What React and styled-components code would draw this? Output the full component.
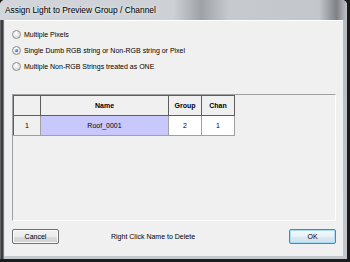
import React, { useState } from "react"
import styled, { createGlobalStyle } from "styled-components"

const GlobalStyle = createGlobalStyle`
  html, body {
    margin: 0;
    padding: 0;
    background: #1b1b1b;
  }
  body {
    width: 350px;
    height: 262px;
    overflow: hidden;
    font-family: "Liberation Sans", Arial, sans-serif;
  }
`

const Window = styled.div`
  display: flex;
  flex-direction: column;
  width: 347px;
  height: 259px;
  border-radius: 5px 5px 0 0;
  overflow: hidden;
  background: linear-gradient(to bottom, #c9ced3 0, #bfc4c9 30px, #b6babe 100%);
`

const TitleBar = styled.div`
  display: flex;
  align-items: center;
  height: 20px;
  padding-left: 5px;
  font-size: 8.4px;
  color: #000;
  text-shadow: 0 0 4px rgba(255, 255, 255, 0.9);
  background: linear-gradient(
    to right,
    #d2d6da 0,
    #cdd1d5 50%,
    #9ea2a6 58%,
    #c6cace 66%,
    #c3c7cb 92%,
    #7e8286 97%,
    #c0c4c8 100%
  );
`

const Frame = styled.div`
  flex: 1;
  display: flex;
  padding: 0 4px 3px 4px;
  background: linear-gradient(
      to right,
      #8c9094 0,
      #3a3c3e 1px,
      #3a3c3e 3px,
      #b8bcc0 4px,
      transparent 4px
    ),
    linear-gradient(to bottom, #b8bcc0, #c4c8cc);
`

const Client = styled.div`
  flex: 1;
  display: flex;
  flex-direction: column;
  background: #f0f0f0;
  border-top: 1px solid #ffffff;
  border-left: 1px solid #e6e6e6;
  font-size: 7px;
  color: #000;
`

const Options = styled.div`
  display: flex;
  flex-direction: column;
  gap: 6px;
  padding: 8px 7px 0 7px;
`

const OptionRow = styled.label`
  display: flex;
  align-items: center;
  gap: 3px;
  height: 10px;
  cursor: default;
`

const RadioCircle = styled.span`
  position: relative;
  width: 7px;
  height: 7px;
  border-radius: 50%;
  border: 1px solid #8f8f8f;
  background: radial-gradient(circle at 40% 35%, #ffffff 0, #e4e4e4 55%, #cfcfcf 100%);
  box-sizing: content-box;

  &::after {
    content: "";
    display: ${(p) => (p.checked ? "block" : "none")};
    position: absolute;
    left: 2px;
    top: 2px;
    width: 3px;
    height: 3px;
    border-radius: 50%;
    background: radial-gradient(circle at 35% 35%, #8ed0f5 0, #2a6fae 60%, #174d80 100%);
  }
`

const Panel = styled.div`
  height: 127px;
  margin: 23px 7px 0 7px;
  border-top: 1px solid #a0a0a0;
  border-left: 1px solid #a0a0a0;
  border-right: 1px solid #ffffff;
  border-bottom: 1px solid #ffffff;
  box-sizing: border-box;
  background: #f0f0f0;
`

const Grid = styled.table`
  width: 222px;
  border-collapse: collapse;
  table-layout: fixed;
  font-size: 7px;
`

const HeadCell = styled.th`
  height: 19px;
  padding: 0;
  border: 1px solid #5e5e5e;
  font-weight: bold;
  text-align: center;
  background: #f0f0f0;
`

const Cell = styled.td`
  height: 19px;
  padding: 0;
  border: 1px solid #a0a0a0;
  text-align: center;
  background: ${(p) => p.bg || "#ffffff"};
`

const RowHead = styled(Cell)`
  border-left-color: #5e5e5e;
  border-top-color: #5e5e5e;
`

const Footer = styled.div`
  display: flex;
  align-items: center;
  padding: 0 7px;
  margin-top: 8px;
`

const Button = styled.button`
  width: 47px;
  height: 15px;
  padding: 0;
  font-family: inherit;
  font-size: 7px;
  color: #000;
  border-radius: 2px;
  border: 1px solid ${(p) => (p.primary ? "#3c8ccc" : "#707070")};
  background: ${(p) =>
    p.primary
      ? "linear-gradient(to bottom, #f4f9fc 0, #e8f1f7 50%, #d9e8f3 51%, #cfe1ee 100%)"
      : "linear-gradient(to bottom, #f2f2f2 0, #ebebeb 50%, #dddddd 51%, #cfcfcf 100%)"};
  box-shadow: ${(p) =>
    p.primary ? "inset 0 0 0 1px #a8dcf5" : "inset 0 0 0 1px #fcfcfc"};
`

const Hint = styled.span`
  margin-left: 52px;
`

const Spacer = styled.div`
  flex: 1;
`

const options = [
  "Multiple Pixels",
  "Single Dumb RGB string or Non-RGB string or Pixel",
  "Multiple Non-RGB Strings treated as ONE",
]

const columns = [
  { key: "row", label: "", width: 27 },
  { key: "name", label: "Name", width: 128 },
  { key: "group", label: "Group", width: 33 },
  { key: "chan", label: "Chan", width: 33 },
]

const App = () => {
  const [selected, setSelected] = useState(1)

  return (
    <>
      <GlobalStyle />
      <Window>
        <TitleBar>Assign Light to Preview Group / Channel</TitleBar>
        <Frame>
          <Client>
            <Options>
              {options.map((label, i) => (
                <OptionRow key={label} onClick={() => setSelected(i)}>
                  <RadioCircle checked={selected === i} />
                  <span>{label}</span>
                </OptionRow>
              ))}
            </Options>
            <Panel>
              <Grid>
                <colgroup>
                  {columns.map((c) => (
                    <col key={c.key} style={{ width: c.width }} />
                  ))}
                </colgroup>
                <thead>
                  <tr>
                    {columns.map((c) => (
                      <HeadCell key={c.key}>{c.label}</HeadCell>
                    ))}
                  </tr>
                </thead>
                <tbody>
                  <tr>
                    <RowHead bg="#f0f0f0">1</RowHead>
                    <Cell bg="#c8c8fc">Roof_0001</Cell>
                    <Cell>2</Cell>
                    <Cell>1</Cell>
                  </tr>
                </tbody>
              </Grid>
            </Panel>
            <Footer>
              <Button>Cancel</Button>
              <Hint>Right Click Name to Delete</Hint>
              <Spacer />
              <Button primary>OK</Button>
            </Footer>
          </Client>
        </Frame>
      </Window>
    </>
  )
}

export default App
